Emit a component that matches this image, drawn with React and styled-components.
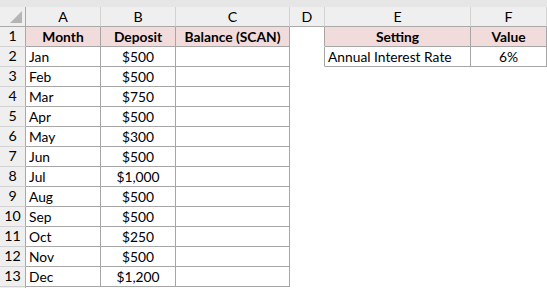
import React from "react";
import styled, { createGlobalStyle } from "styled-components";

const Global = createGlobalStyle`
  html, body { margin: 0; padding: 0; background: #fff; }
  body { font-family: Lato, "Liberation Sans", sans-serif; font-size: 13.8px; color: #000; }
`;

const COLS = "26px 75px 75px 114px 35px 146px 76px 1fr";
const GRID = "#a6a6a6";

const Sheet = styled.div`
  width: 547px;
  height: 288px;
  overflow: hidden;
  background: #fff;
  display: flex;
  flex-direction: column;
`;

const TopStrip = styled.div`
  height: 7px;
  flex: none;
  background: #e6e6e6;
`;

const Row = styled.div`
  display: grid;
  grid-template-columns: ${COLS};
  height: 20px;
  flex: none;
`;

const ColHead = styled.div`
  box-sizing: border-box;
  background: #efefef;
  border-right: 1px solid #d2d2d2;
  border-bottom: 1px solid #a9a9a9;
  display: flex;
  align-items: center;
  justify-content: center;
  line-height: 1;
  padding-top: 1px;
  font-size: 14.2px;
`;

const Corner = styled(ColHead)`
  position: relative;
  border-right: 1px solid #a9a9a9;
  svg { position: absolute; right: 3px; bottom: 3px; }
`;

const RowHead = styled.div`
  box-sizing: border-box;
  background: #efefef;
  border-right: 1px solid #a9a9a9;
  border-bottom: 1px solid #d2d2d2;
  display: flex;
  align-items: center;
  justify-content: center;
  line-height: 1;
  font-size: 14.2px;
`;

const Cell = styled.div`
  box-sizing: border-box;
  display: flex;
  align-items: center;
  white-space: nowrap;
  overflow: hidden;
  line-height: 1;
  padding: 1px 3px 0;
  justify-content: ${(p) => (p.$align === "center" ? "center" : "flex-start")};
  font-weight: ${(p) => (p.$bold ? 700 : 400)};
  background: ${(p) => (p.$head ? "#f2dcdb" : "#fff")};
  border-right: 1px solid ${(p) => (p.$br ? GRID : "transparent")};
  border-bottom: 1px solid ${(p) => (p.$bb ? GRID : "transparent")};
`;

const months = [
  ["Jan", "$500"],
  ["Feb", "$500"],
  ["Mar", "$750"],
  ["Apr", "$500"],
  ["May", "$300"],
  ["Jun", "$500"],
  ["Jul", "$1,000"],
  ["Aug", "$500"],
  ["Sep", "$500"],
  ["Oct", "$250"],
  ["Nov", "$500"],
  ["Dec", "$1,200"],
];

const letters = ["A", "B", "C", "D", "E", "F", ""];

export default function App() {
  const rows = [];
  rows.push(
    <Row key="r1">
      <RowHead>1</RowHead>
      <Cell $head $bold $align="center" $br $bb>Month</Cell>
      <Cell $head $bold $align="center" $br $bb>Deposit</Cell>
      <Cell $head $bold $align="center" $br $bb>Balance (SCAN)</Cell>
      <Cell $br />
      <Cell $head $bold $align="center" $br $bb>Setting</Cell>
      <Cell $head $bold $align="center" $br $bb>Value</Cell>
      <Cell />
    </Row>
  );
  months.forEach(([m, d], i) => {
    const n = i + 2;
    const isSetting = n === 2;
    rows.push(
      <Row key={n}>
        <RowHead>{n}</RowHead>
        <Cell $br $bb>{m}</Cell>
        <Cell $align="center" $br $bb>{d}</Cell>
        <Cell $br $bb />
        <Cell $br={isSetting} />
        {isSetting ? (
          <>
            <Cell $br $bb>Annual Interest Rate</Cell>
            <Cell $align="center" $br $bb>6%</Cell>
          </>
        ) : (
          <>
            <Cell />
            <Cell />
          </>
        )}
        <Cell />
      </Row>
    );
  });
  rows.push(
    <Row key="r14">
      <RowHead />
      <Cell />
      <Cell />
      <Cell />
      <Cell />
      <Cell />
      <Cell />
      <Cell />
    </Row>
  );

  return (
    <>
      <Global />
      <Sheet>
        <TopStrip />
        <Row>
          <Corner>
            <svg width="12" height="12" viewBox="0 0 12 12">
              <polygon points="12,0 12,12 0,12" fill="#b5b5b5" />
            </svg>
          </Corner>
          {letters.map((l, i) => (
            <ColHead key={i}>{l}</ColHead>
          ))}
        </Row>
        {rows}
      </Sheet>
    </>
  );
}
